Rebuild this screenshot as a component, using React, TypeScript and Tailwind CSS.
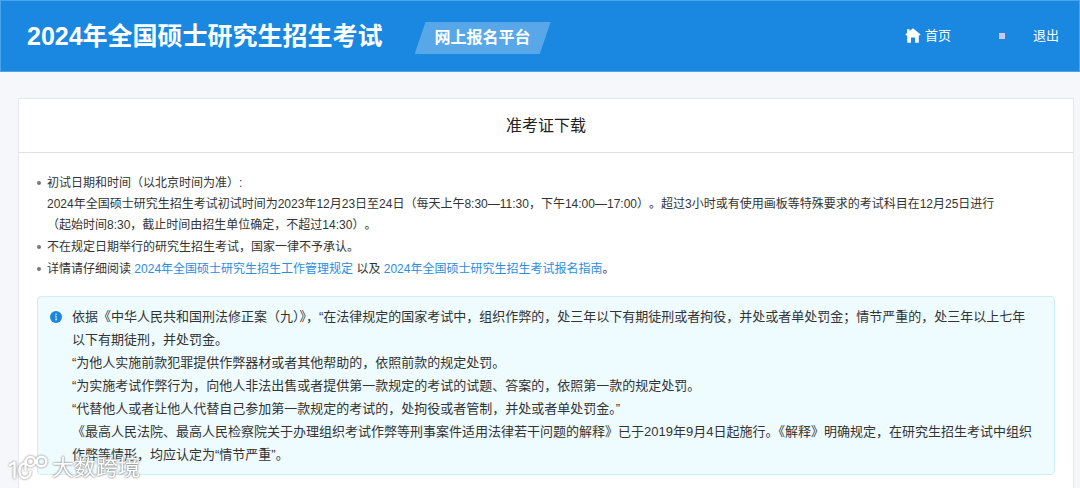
import React from 'react';

const NOTICE_PARAGRAPHS = [
    [
        '依据《中华人民共和国刑法修正案（九）》，“在法律规定的国家考试中，组织作弊的，处三年以下有期徒刑或者拘役，并处或者单处罚金；情节严重的，处三年以上七年',
        '以下有期徒刑，并处罚金。',
    ],
    ['“为他人实施前款犯罪提供作弊器材或者其他帮助的，依照前款的规定处罚。'],
    [
        '“为实施考试作弊行为，向他人非法出售或者提供第一款规定的考试的试题、答案的，依照第一款的规定处罚。',
    ],
    ['“代替他人或者让他人代替自己参加第一款规定的考试的，处拘役或者管制，并处或者单处罚金。”'],
    [
        '《最高人民法院、最高人民检察院关于办理组织考试作弊等刑事案件适用法律若干问题的解释》已于2019年9月4日起施行。《解释》明确规定，在研究生招生考试中组织',
        '作弊等情形，均应认定为“情节严重”。',
    ],
];

function HomeIcon() {
    return (
        <svg viewBox="0 0 16 16" className="size-4" fill="currentColor" aria-hidden="true">
            <path d="M8 0.2 L15.6 6.4 L14.8 7.6 L13.8 7 V14.8 H10 V9.6 H6 V14.8 H2.2 V7 L1.2 7.6 L0.4 6.4 L2 5 V1.2 H4.6 V3 Z" />
        </svg>
    );
}

function InfoIcon() {
    return (
        <svg viewBox="0 0 12 12" className="size-3" aria-hidden="true">
            <circle cx="6" cy="6" r="6" fill="#1a86dc" />
            <rect x="5.4" y="2.6" width="1.3" height="1.3" fill="#fff" />
            <path d="M5.2 5h0.9v3.8M5.2 8.8h1.8" stroke="#fff" strokeWidth="0.8" fill="none" />
        </svg>
    );
}

function Header() {
    return (
        <header className="flex h-18 items-center justify-between border border-[#4ba3ea] bg-[#1a87e0] pr-5 pl-6.5 text-white">
            <div className="flex items-center gap-8">
                <h1 className="text-[25px] leading-8 font-bold">2024年全国硕士研究生招生考试</h1>
                <div className="mt-1 flex h-8 w-34 items-center justify-center bg-[#58a8e9] text-base font-bold [clip-path:polygon(8%_0,100%_0,92%_100%,0_100%)]">
                    网上报名平台
                </div>
            </div>
            <nav className="flex items-center text-[13px]">
                <a href="#home" className="flex items-center gap-1">
                    <HomeIcon />
                    首页
                </a>
                <span className="mr-7 ml-12 size-1.5 bg-[#d0c8ec]" />
                <a href="#logout">退出</a>
            </nav>
        </header>
    );
}

function ExamInfo() {
    return (
        <ul className="flex list-none flex-col gap-px text-[12px] leading-[21px] [text-spacing-trim:space-all]">
            <InfoItem>
                初试日期和时间（以北京时间为准）:
                <br />
                2024年全国硕士研究生招生考试初试时间为2023年12月23日至24日（每天上午8:30—11:30，下午14:00—17:00）。超过3小时或有使用画板等特殊要求的考试科目在12月25日进行
                <br />
                （起始时间8:30，截止时间由招生单位确定，不超过14:30）。
            </InfoItem>
            <InfoItem>不在规定日期举行的研究生招生考试，国家一律不予承认。</InfoItem>
            <InfoItem>
                详情请仔细阅读{' '}
                <a href="#regulation" className="text-[#2b8ddf]">
                    2024年全国硕士研究生招生工作管理规定
                </a>{' '}
                以及{' '}
                <a href="#guide" className="text-[#2b8ddf]">
                    2024年全国硕士研究生招生考试报名指南
                </a>
                。
            </InfoItem>
        </ul>
    );
}

function InfoItem({ children }: { children: React.ReactNode }) {
    return (
        <li className="flex gap-1.5">
            <span className="mt-2 size-1 shrink-0 rounded-full bg-[#777]" />
            <div>{children}</div>
        </li>
    );
}

function Notice() {
    return (
        <section className="mt-4 flex gap-2.5 rounded-sm border border-[#cfeefa] bg-[#eefbff] py-2 pr-4 pl-3">
            <div className="mt-1.5 shrink-0">
                <InfoIcon />
            </div>
            <div className="text-[13px] leading-[23px]">
                {NOTICE_PARAGRAPHS.map((lines) => (
                    <p key={lines[0]}>
                        {lines.map((line, index) => (
                            <React.Fragment key={line}>
                                {index > 0 && <br />}
                                {line}
                            </React.Fragment>
                        ))}
                    </p>
                ))}
            </div>
        </section>
    );
}

function Watermark() {
    return (
        <div className="pointer-events-none fixed bottom-1.5 left-2 flex items-center gap-1 text-[22px] leading-7 text-white [text-shadow:0_0_2px_#777,0_0_2px_#999]">
            <svg
                viewBox="0 0 40 28"
                className="h-7 w-10 overflow-visible drop-shadow-[0_0_1px_#777]"
                fill="none"
                stroke="#fff"
                strokeWidth="2.4"
                strokeLinecap="round"
                strokeLinejoin="round"
                aria-hidden="true"
            >
                <path d="M2 11 L6.5 8.5 V23.5" />
                <path d="M16 9.5 C9.5 11.5 10 23.5 16.5 24 C20.5 24 22.5 20.5 22.5 18" />
                <path d="M17.5 16 V7" />
                <circle cx="22.5" cy="7.5" r="4.6" />
                <circle cx="33.5" cy="7.5" r="4.8" />
            </svg>
            <span>大数跨境</span>
        </div>
    );
}

export default function App() {
    return (
        <div className="flex min-h-screen flex-col bg-[#f6f7fa] font-['Liberation_Sans','Noto_Sans_CJK_SC',sans-serif] text-[#333]">
            <Header />
            <main className="mt-6.5 mr-1.5 ml-4.5 flex flex-1 flex-col border border-b-0 border-[#e6e8eb] bg-white">
                <h2 className="border-b border-[#e0e0e0] py-3.5 text-center text-base leading-[25px] text-[#222]">
                    准考证下载
                </h2>
                <div className="px-4.5 pt-5 pb-3">
                    <ExamInfo />
                    <Notice />
                </div>
            </main>
            <Watermark />
        </div>
    );
}
